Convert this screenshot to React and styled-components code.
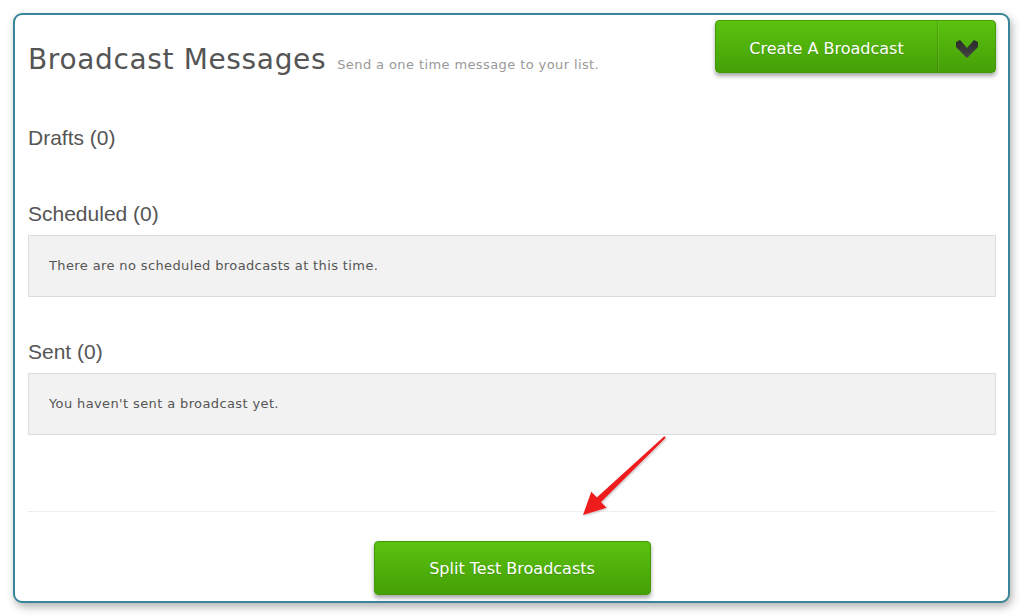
import React from "react";
import styled, { createGlobalStyle } from "styled-components";

const GlobalStyle = createGlobalStyle`
  body {
    margin: 0;
    background: #ffffff;
    font-family: "DejaVu Sans", Verdana, sans-serif;
  }
`;

const sections = [
  { title: "Drafts", count: 0, empty: null },
  {
    title: "Scheduled",
    count: 0,
    empty: "There are no scheduled broadcasts at this time.",
  },
  { title: "Sent", count: 0, empty: "You haven't sent a broadcast yet." },
];

const Chevron = () => (
  <svg width="22" height="18" viewBox="0 0 22 18">
    <defs>
      <linearGradient id="chev" x1="0" y1="0" x2="0" y2="1">
        <stop offset="0" stopColor="#2b2b2b" />
        <stop offset="1" stopColor="#444" />
      </linearGradient>
    </defs>
    <path d="M0 2 L4 0 L11 8 L18 0 L22 2 L22 7 L11 18 L0 7 Z" fill="url(#chev)" />
  </svg>
);

// red pointer drawn over the page, aimed at the split test button
const Pointer = () => (
  <PointerSvg viewBox="0 0 1024 616" width="1024" height="616">
    <defs>
      <filter id="ptrShadow" x="-20%" y="-20%" width="140%" height="140%">
        <feDropShadow dx="1" dy="1" stdDeviation="1" floodColor="#000" floodOpacity="0.25" />
      </filter>
    </defs>
    <polygon
      points="665.7,437.7 664.3,436.3 596.8,497.6 591.3,491.8 583,515 606.5,507.8 601,502"
      fill="#ee1b1b"
      filter="url(#ptrShadow)"
    />
  </PointerSvg>
);

export default function App() {
  return (
    <>
      <GlobalStyle />
      <Page>
        <Frame>
          <Header>
            <TitleRow>
              <Title>Broadcast Messages</Title>
              <Subtitle>Send a one time message to your list.</Subtitle>
            </TitleRow>
            <SplitButton>
              <MainAction>Create A Broadcast</MainAction>
              <Toggle>
                <Chevron />
              </Toggle>
            </SplitButton>
          </Header>

          <Sections>
            {sections.map((s) => (
              <Section key={s.title}>
                <SectionTitle>
                  {s.title} ({s.count})
                </SectionTitle>
                {s.empty && <EmptyBox>{s.empty}</EmptyBox>}
              </Section>
            ))}
          </Sections>

          <Footer>
            <GreenButton>Split Test Broadcasts</GreenButton>
          </Footer>
        </Frame>
        <Pointer />
      </Page>
    </>
  );
}

const Page = styled.div`
  position: relative;
  width: 1024px;
  height: 616px;
  padding: 13px 0 0 13px;
  box-sizing: border-box;
`;

const Frame = styled.div`
  width: 997px;
  box-sizing: border-box;
  border: 2px solid #3a8598;
  border-radius: 9px;
  background: #fff;
  box-shadow: 2px 4px 9px rgba(0, 0, 0, 0.3);
  padding: 5px 12px 6px 13px;
  display: flex;
  flex-direction: column;
`;

const Header = styled.div`
  display: flex;
  justify-content: space-between;
  align-items: flex-start;
`;

const TitleRow = styled.div`
  display: flex;
  align-items: baseline;
  margin-top: 23px;
`;

const Title = styled.h1`
  margin: 0;
  font-size: 28px;
  line-height: 34px;
  font-weight: normal;
  letter-spacing: 0.65px;
  color: #555;
`;

const Subtitle = styled.span`
  margin-left: 11px;
  font-size: 13px;
  letter-spacing: 0.4px;
  color: #999;
`;

const buttonFace = `
  background: linear-gradient(#5bc20e, #45a007);
  color: #fff;
  font-family: "DejaVu Sans", Verdana, sans-serif;
  font-size: 16px;
  text-shadow: 0 1px 1px rgba(0, 0, 0, 0.15);
  border: 1px solid #429a08;
  border-radius: 4px;
  box-shadow: 0 3px 4px rgba(0, 0, 0, 0.35);
`;

const SplitButton = styled.div`
  ${buttonFace}
  display: flex;
  width: 281px;
  height: 53px;
  box-sizing: border-box;
`;

const MainAction = styled.button`
  flex: 1;
  background: none;
  border: none;
  color: inherit;
  font: inherit;
  text-shadow: inherit;
  padding: 3px 0 0;
  cursor: pointer;
`;

const Toggle = styled.div`
  width: 57px;
  display: flex;
  align-items: center;
  justify-content: center;
  border-left: 1px solid rgba(0, 0, 0, 0.12);
  box-shadow: inset 1px 0 0 rgba(255, 255, 255, 0.1);
  padding-top: 5px;
`;

const Sections = styled.div`
  display: flex;
  flex-direction: column;
  gap: 43px;
  margin-top: 49px;
  margin-bottom: 76px;
`;

const Section = styled.section`
  display: flex;
  flex-direction: column;
`;

const SectionTitle = styled.h3`
  margin: 0 0 9px;
  font-family: "Liberation Sans", Arial, sans-serif;
  font-size: 21px;
  line-height: 24px;
  font-weight: normal;
  color: #555;
`;

const EmptyBox = styled.div`
  background: #f2f2f2;
  border: 1px solid #dcdcdc;
  padding: 22px 20px;
  font-size: 13px;
  line-height: 16px;
  letter-spacing: 0.38px;
  color: #555;
`;

const Footer = styled.div`
  border-top: 1px dotted #e2e2e2;
  padding-top: 29px;
  display: flex;
  justify-content: center;
`;

const GreenButton = styled.button`
  ${buttonFace}
  width: 277px;
  height: 54px;
  cursor: pointer;
`;

const PointerSvg = styled.svg`
  position: absolute;
  top: 0;
  left: 0;
  pointer-events: none;
`;
